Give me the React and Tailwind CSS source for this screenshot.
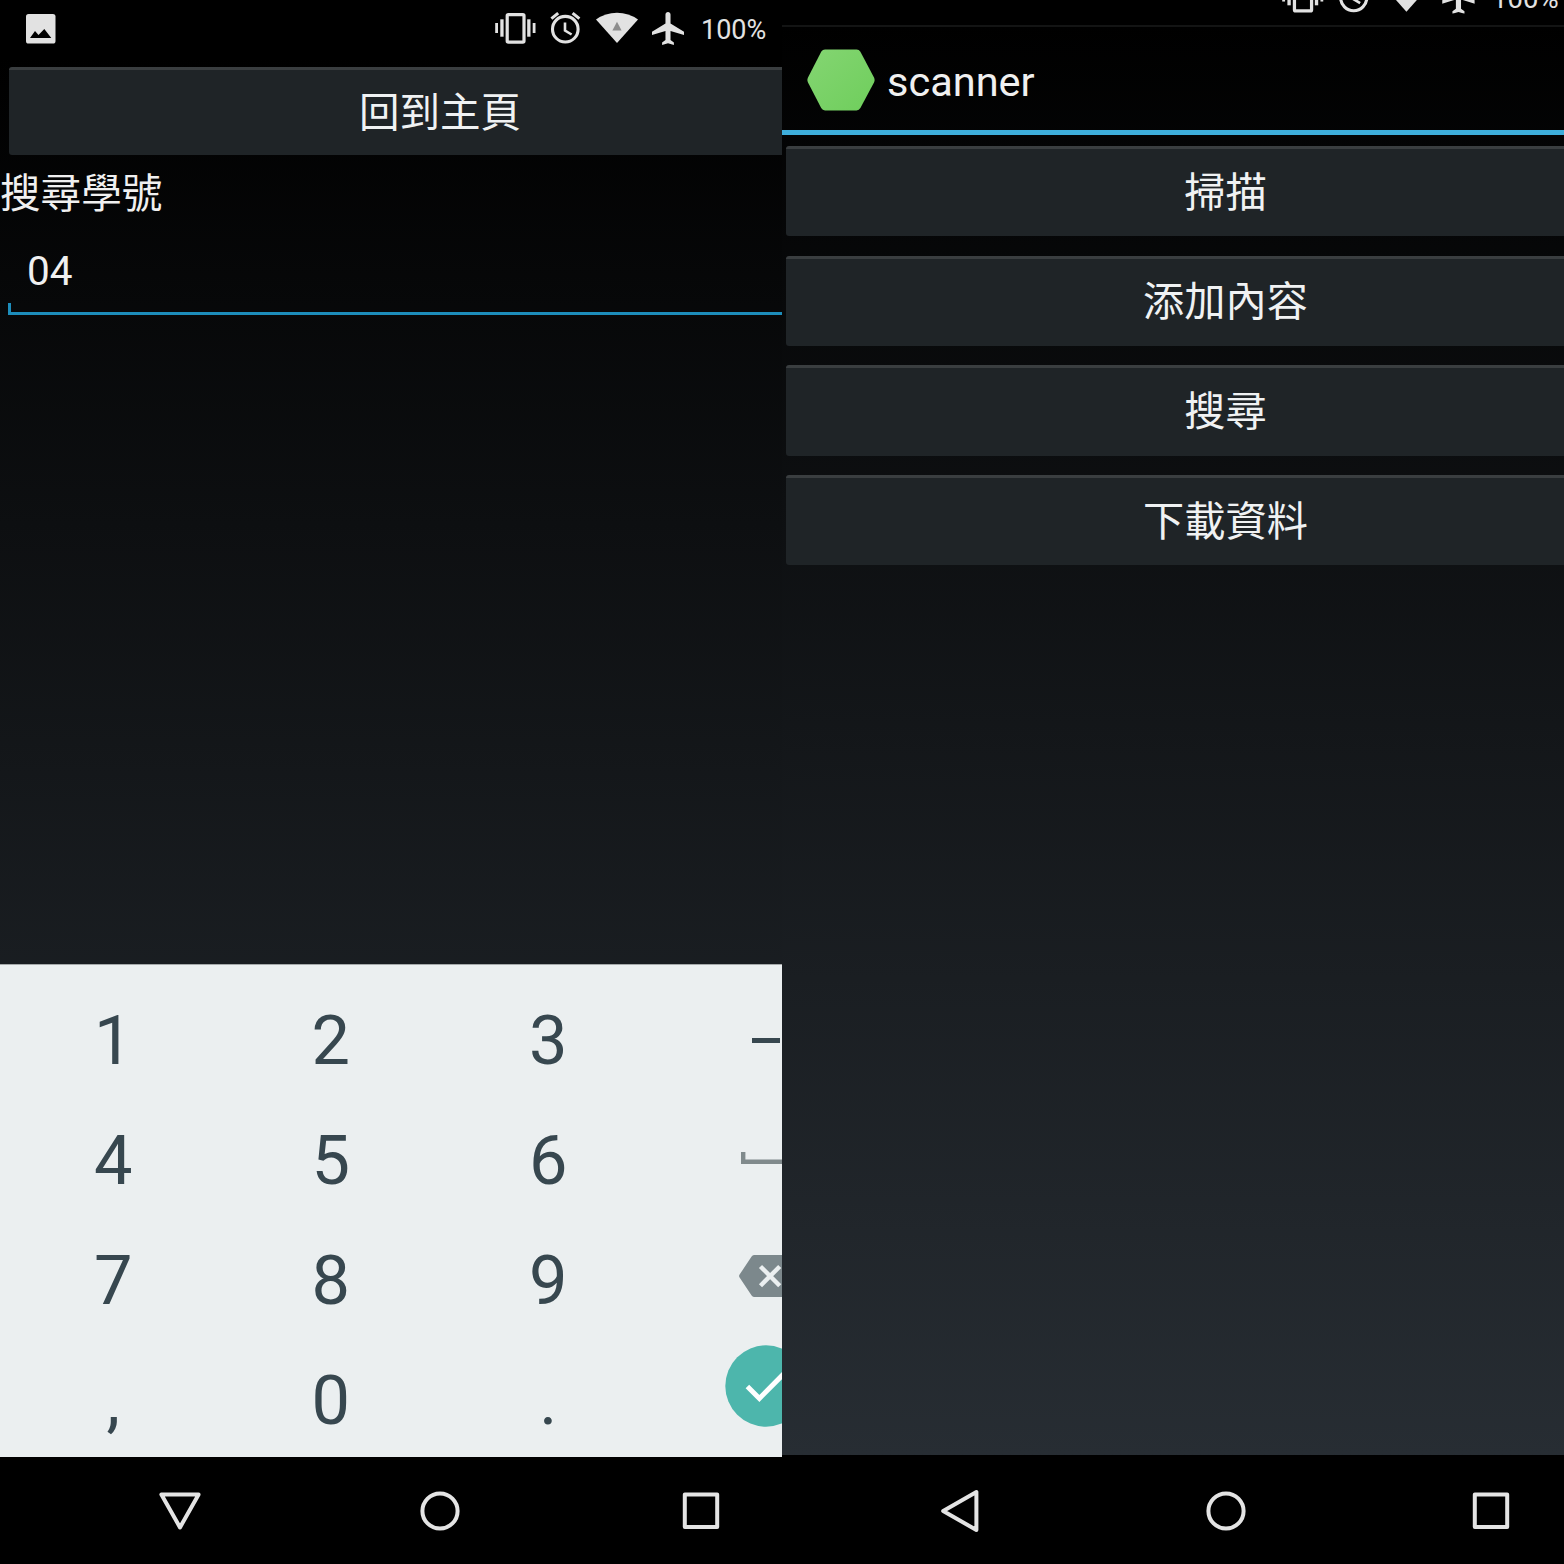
import React from "react";

const CJK = "font-['Roboto','Noto_Sans_CJK_TC',sans-serif]";

function StatusIcons({ className }) {
  return (
    <div className={`flex shrink-0 items-start text-[#e2e2e2] ${className}`}>
      <svg width="41" height="40" viewBox="0 0 41 40" fill="currentColor">
        <rect x="0.2" y="15" width="2.8" height="10" />
        <rect x="5.3" y="11.3" width="3.3" height="17.4" />
        <rect x="32.2" y="11.3" width="3.3" height="17.4" />
        <rect x="37.7" y="15" width="2.8" height="10" />
        <rect x="12.2" y="6.6" width="16.8" height="27.6" rx="1.2" fill="none" stroke="currentColor" strokeWidth="3.2" />
      </svg>
      <svg className="ml-[14px]" width="31" height="40" viewBox="0 0 31 40" fill="none" stroke="currentColor" strokeWidth="3.1">
        <circle cx="15.3" cy="21.2" r="12.8" />
        <path d="M1.4 10.6 8.2 5.1M22.6 5.1l6.8 5.5" />
        <path d="M15 14.4v8.2l6.6 3.9" strokeWidth="2.6" />
      </svg>
      <svg className="ml-[15px]" width="43" height="40" viewBox="0 0 43 40" fill="currentColor">
        <path d="M0 11.4A36 36 0 0 1 42 11.4L21 35Z" />
        <path d="M21 13.8 25.6 22.4H16.4Z" fill="#8c8c8c" />
      </svg>
      <svg className="ml-[13px] mt-[4px]" width="32" height="33" viewBox="2 2 19 20" preserveAspectRatio="none" fill="currentColor">
        <path d="M21 16v-2l-8-5V3.5c0-.83-.67-1.5-1.5-1.5S10 2.67 10 3.5V9l-8 5v2l8-2.5V19l-2 1.5V22l3.5-1 3.5 1v-1.5L13 19v-5.5l8 2.5z" />
      </svg>
      <span className="ml-[17px] mt-[7px] text-[27px] leading-[31px]">100%</span>
    </div>
  );
}

function HoloButton({ className, children }) {
  return (
    <button
      className={`flex shrink-0 items-center justify-center rounded-[3px] border-t-[3px] border-[#3a3e40] bg-[#1f2427] text-[#f0f2f3] ${className}`}
    >
      {children}
    </button>
  );
}

function NavBar({ back, className, cell }) {
  return (
    <nav className={`flex shrink-0 bg-black text-[#e4e4e4] ${className}`}>
      <div className={`flex shrink-0 justify-center ${cell}`}>
        <svg width="48" height="48" viewBox="0 0 48 48" fill="none" stroke="currentColor" strokeWidth="4" strokeLinejoin="round">
          <path d={back} />
        </svg>
      </div>
      <div className={`flex shrink-0 justify-center ${cell}`}>
        <svg width="48" height="48" viewBox="0 0 48 48" fill="none" stroke="currentColor" strokeWidth="4">
          <circle cx="24" cy="24" r="17.6" />
        </svg>
      </div>
      <div className={`flex shrink-0 justify-center ${cell}`}>
        <svg width="48" height="48" viewBox="0 0 48 48" fill="none" stroke="currentColor" strokeWidth="4" strokeLinejoin="round">
          <rect x="7.8" y="7.6" width="32.4" height="32.4" />
        </svg>
      </div>
    </nav>
  );
}

function Dash() {
  return <div className="mb-[2px] h-[5px] w-7 bg-[#37474f]" />;
}

function Space() {
  return (
    <svg className="mb-[7px]" width="50" height="12" viewBox="0 0 50 12" fill="none" stroke="#808a8c" strokeWidth="4.4">
      <path d="M2.2 0V9.8H47.8V0" />
    </svg>
  );
}

function Backspace() {
  return (
    <svg className="mb-[10px]" width="54" height="42" viewBox="0 0 54 42">
      <path d="M15 0H50a3 3 0 0 1 3 3V39a3 3 0 0 1-3 3H15a3 3 0 0 1-2.4-1.4L0.6 22.4a2.4 2.4 0 0 1 0-2.8L12.6 1.4A3 3 0 0 1 15 0Z" fill="#7c888c" />
      <path d="M21.5 11.5 40.7 30.7M40.7 11.5 21.5 30.7" stroke="#ebeff0" strokeWidth="4.4" fill="none" />
    </svg>
  );
}

function Enter() {
  return (
    <svg className="mb-[30px]" width="82" height="82" viewBox="0 0 82 82">
      <circle cx="41" cy="41" r="40.7" fill="#4db6ac" />
      <path d="M22.4 41.4 34.4 53.4 60 27.6" stroke="#fff" strokeWidth="5" fill="none" />
    </svg>
  );
}

const KEYS = ["1", "2", "3", <Dash />, "4", "5", "6", <Space />, "7", "8", "9", <Backspace />, ",", "0", ".", <Enter />];

function SearchScreen() {
  return (
    <section className="h-[1564px] w-[782px] overflow-hidden">
      <div className="flex h-full w-[879px] flex-col">
        <header className="flex h-[57px] shrink-0 bg-black pl-[26px] pt-[8px]">
          <svg className="mt-[6px]" width="30" height="30" viewBox="0 0 30 30">
            <rect width="29.5" height="29.5" rx="2.6" fill="#e2e2e2" />
            <path d="M4 24 9 17 12.5 21 18.3 15 25.3 24Z" fill="#000" />
          </svg>
          <StatusIcons className="ml-[439px]" />
        </header>
        <main className="flex h-[907px] shrink-0 flex-col bg-[linear-gradient(to_bottom,#000_0px,#272d33_1400px)] pt-[10px]">
          <HoloButton className="ml-[9px] mr-[8px] h-[88px] pt-[2px] text-[40.5px]">回到主頁</HoloButton>
          <label className="mt-[12px] h-[55px] text-[40.6px] leading-[55px] text-[#f0f0f0]">搜尋學號</label>
          <div className="mx-[8px] mt-[12px] flex h-[81px] shrink-0 flex-col">
            <span className="h-[69px] pl-[19px] text-[40.5px] leading-[74px] text-[#f0f0f0]">04</span>
            <span className="h-[12px] border-x-[3px] border-b-[3px] border-[#1d8dbb]" />
          </div>
        </main>
        <div className="grid h-[493px] shrink-0 grid-cols-[repeat(4,217.5px)] grid-rows-[repeat(4,119.8px)] border-t border-[#a5a9aa] bg-[#ebeff0] pl-[4.6px] pt-[16.4px] text-[68.5px] text-[#37474f]">
          {KEYS.map((k, i) => (
            <div key={i} className="flex items-center justify-center leading-[80px]">
              {k}
            </div>
          ))}
        </div>
        <NavBar back="M5.4 7.6H42.6L24 40.4Z" className="h-[107px] pl-[49.7px] pt-[30px]" cell="w-[260.4px]" />
      </div>
    </section>
  );
}

function HomeScreen() {
  return (
    <section className="h-[1564px] w-[782px] overflow-hidden">
      <div className="flex h-full w-[887px] flex-col">
        <header className="flex h-[25px] shrink-0 items-end overflow-hidden bg-black pl-[500px]">
          <StatusIcons className="origin-bottom-left scale-[1.02] pb-[8px]" />
        </header>
        <div className="flex h-[1430px] shrink-0 flex-col bg-[linear-gradient(to_bottom,#000,#272d33)]">
          <div className="flex h-[110px] shrink-0 items-center border-t-2 border-b-[5px] border-t-[#131414] border-b-[#3eaedb] pl-[25px] pt-[2px]">
            <svg width="68" height="62" viewBox="0 0 68 62">
              <defs>
                <linearGradient id="hex" x1="0" y1="0" x2="1" y2="1">
                  <stop offset="0" stopColor="#84d572" />
                  <stop offset="1" stopColor="#6fce5c" />
                </linearGradient>
              </defs>
              <path d="M18 0.5H49.6Q52 0.5 53.4 2.8L67 28.4Q68.2 31 67 33.4L53.4 59Q52 61.4 49.6 61.4H18Q15.6 61.4 14.2 59L1 33.4Q-0.2 31 1 28.4L14.2 2.8Q15.6 0.5 18 0.5Z" fill="url(#hex)" />
            </svg>
            <h1 className="ml-[12px] pt-[4px] text-[41.5px] leading-[48px] text-[#f0f0f0]">scanner</h1>
          </div>
          <div className="flex flex-col gap-[19.3px] px-[4px] pt-[11px]">
            {["掃描", "添加內容", "搜尋", "下載資料"].map((t) => (
              <HoloButton key={t} className="h-[90.4px] pt-[1.5px] text-[41.2px]">
                {t}
              </HoloButton>
            ))}
          </div>
        </div>
        <NavBar back="M40.4 5V43L7.2 24Z" className="h-[109px] pl-[45px] pt-[31.5px]" cell="w-[265.7px]" />
      </div>
    </section>
  );
}

export default function App() {
  return (
    <div className={`flex h-[1564px] w-[1564px] overflow-hidden bg-black ${CJK}`}>
      <SearchScreen />
      <HomeScreen />
    </div>
  );
}
